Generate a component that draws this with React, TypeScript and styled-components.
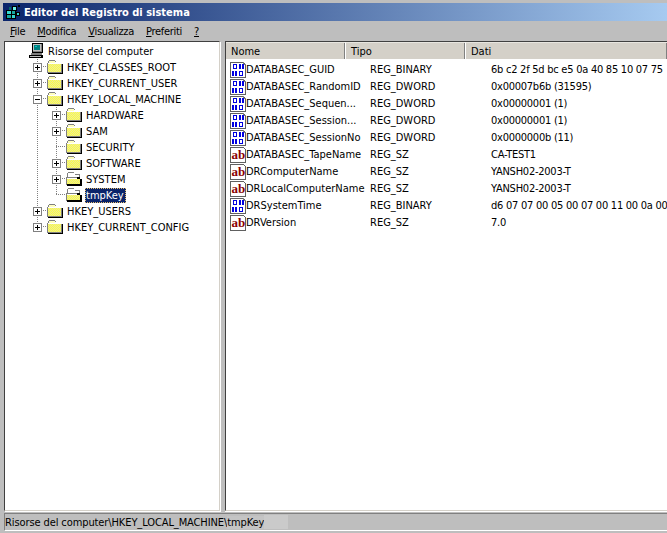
import React from 'react';
import styled, { createGlobalStyle } from 'styled-components';

type Line = 'none' | 'full' | 'half';

const TREE: { label: string; level: number; toggle?: '+' | '-'; open?: boolean; selected?: boolean; last?: boolean }[] = [
  { label: 'HKEY_CLASSES_ROOT', level: 1, toggle: '+' },
  { label: 'HKEY_CURRENT_USER', level: 1, toggle: '+' },
  { label: 'HKEY_LOCAL_MACHINE', level: 1, toggle: '-' },
  { label: 'HARDWARE', level: 2, toggle: '+' },
  { label: 'SAM', level: 2, toggle: '+' },
  { label: 'SECURITY', level: 2 },
  { label: 'SOFTWARE', level: 2, toggle: '+' },
  { label: 'SYSTEM', level: 2, toggle: '+', open: true },
  { label: 'tmpKey', level: 2, open: true, selected: true, last: true },
  { label: 'HKEY_USERS', level: 1, toggle: '+' },
  { label: 'HKEY_CURRENT_CONFIG', level: 1, toggle: '+', last: true },
];

const VALUES: { name: string; type: string; data: string }[] = [
  { name: 'DATABASEC_GUID', type: 'REG_BINARY', data: '6b c2 2f 5d bc e5 0a 40 85 10 07 75' },
  { name: 'DATABASEC_RandomID', type: 'REG_DWORD', data: '0x00007b6b (31595)' },
  { name: 'DATABASEC_Sequen...', type: 'REG_DWORD', data: '0x00000001 (1)' },
  { name: 'DATABASEC_Session...', type: 'REG_DWORD', data: '0x00000001 (1)' },
  { name: 'DATABASEC_SessionNo', type: 'REG_DWORD', data: '0x0000000b (11)' },
  { name: 'DATABASEC_TapeName', type: 'REG_SZ', data: 'CA-TEST1' },
  { name: 'DRComputerName', type: 'REG_SZ', data: 'YANSH02-2003-T' },
  { name: 'DRLocalComputerName', type: 'REG_SZ', data: 'YANSH02-2003-T' },
  { name: 'DRSystemTime', type: 'REG_BINARY', data: 'd6 07 07 00 05 00 07 00 11 00 0a 00' },
  { name: 'DRVersion', type: 'REG_SZ', data: '7.0' },
];

const MENUS: [string, string][] = [
  ['F', 'ile'],
  ['M', 'odifica'],
  ['V', 'isualizza'],
  ['P', 'referiti'],
  ['?', ''],
];

const AppIcon = () => (
  <svg width="16" height="16" viewBox="0 0 16 16" shapeRendering="crispEdges">
    <rect x="1" y="6" width="10" height="9" fill="#000" />
    <rect x="2" y="7" width="4" height="3" fill="#35d8d0" />
    <rect x="7" y="7" width="3" height="3" fill="#18a8a0" />
    <rect x="2" y="11" width="4" height="3" fill="#18a8a0" />
    <rect x="7" y="11" width="3" height="3" fill="#35d8d0" />
    <rect x="7" y="2" width="5" height="5" fill="#000" />
    <rect x="8" y="3" width="3" height="3" fill="#6ff0e8" />
    <rect x="11" y="8" width="4" height="4" fill="#000" />
    <rect x="12" y="9" width="2" height="2" fill="#35d8d0" />
    <rect x="4" y="3" width="2" height="3" fill="#0a6a68" />
    <rect x="13" y="1" width="2" height="2" fill="#000" />
  </svg>
);

const ComputerIcon = () => (
  <svg width="16" height="16" viewBox="0 0 16 16" shapeRendering="crispEdges">
    <rect x="4" y="0" width="11" height="10" fill="#000" />
    <rect x="5" y="1" width="8" height="7" fill="#c0c0c0" />
    <rect x="6" y="2" width="6" height="5" fill="#007f7f" />
    <rect x="7" y="3" width="2" height="1" fill="#00c8c8" />
    <rect x="13" y="1" width="1" height="8" fill="#808080" />
    <rect x="5" y="8" width="8" height="1" fill="#808080" />
    <rect x="3" y="10" width="11" height="2" fill="#808080" />
    <rect x="1" y="12" width="14" height="3" fill="#000" />
    <rect x="2" y="13" width="11" height="1" fill="#c0c0c0" />
  </svg>
);

// checkerboard fill of the old 16 colour folder bitmap
const Dither = ({ x, y, w, h }: { x: number; y: number; w: number; h: number }) => {
  const cells: React.ReactNode[] = [];
  for (let row = 0; row < h; row++) {
    for (let col = 0; col < w; col++) {
      cells.push(
        <rect
          key={`${row}-${col}`}
          x={x + col}
          y={y + row}
          width="1"
          height="1"
          fill={(row + col) % 2 === 0 ? '#ffff40' : '#e8e8a0'}
        />,
      );
    }
  }
  return <>{cells}</>;
};

const FolderIcon = () => (
  <svg width="16" height="14" viewBox="0 0 16 14" shapeRendering="crispEdges">
    <rect x="2" y="0" width="6" height="1" fill="#808080" />
    <rect x="1" y="1" width="1" height="2" fill="#808080" />
    <rect x="8" y="1" width="1" height="1" fill="#808080" />
    <rect x="2" y="1" width="6" height="2" fill="#ffffc0" />
    <rect x="0" y="3" width="15" height="10" fill="#808080" />
    <rect x="1" y="3" width="14" height="1" fill="#ffffff" />
    <Dither x={1} y={4} w={13} h={8} />
    <rect x="1" y="13" width="15" height="1" fill="#000" />
    <rect x="15" y="4" width="1" height="10" fill="#000" />
  </svg>
);

const OpenFolderIcon = () => (
  <svg width="16" height="14" viewBox="0 0 16 14" shapeRendering="crispEdges">
    <rect x="2" y="0" width="6" height="1" fill="#808080" />
    <rect x="1" y="1" width="1" height="5" fill="#808080" />
    <rect x="2" y="1" width="11" height="5" fill="#ffffff" />
    <rect x="9" y="2" width="4" height="1" fill="#808080" />
    <rect x="13" y="2" width="1" height="5" fill="#808080" />
    <rect x="0" y="5" width="11" height="1" fill="#808080" />
    <rect x="1" y="6" width="10" height="1" fill="#ffffff" />
    <rect x="0" y="6" width="1" height="7" fill="#808080" />
    <Dither x={1} y={7} w={13} h={5} />
    <rect x="11" y="5" width="3" height="2" fill="#000" />
    <rect x="14" y="7" width="2" height="6" fill="#000" />
    <rect x="1" y="12" width="15" height="2" fill="#000" />
  </svg>
);

const Toggle = ({ kind }: { kind: '+' | '-' }) => (
  <svg width="9" height="9" viewBox="0 0 9 9" shapeRendering="crispEdges">
    <rect x="0.5" y="0.5" width="8" height="8" fill="#fff" stroke="#808080" />
    <rect x="2" y="4" width="5" height="1" fill="#000" />
    {kind === '+' && <rect x="4" y="2" width="1" height="5" fill="#000" />}
  </svg>
);

const BinaryIcon = () => (
  <ValueIconSvg width="16" height="16" viewBox="0 0 16 16" shapeRendering="crispEdges">
    <path d="M0.5 0.5H13.5L15.5 2.5V15.5H0.5Z" fill="#fff" stroke="#606060" />
    <path d="M13 0H14V2H16V3H13Z" fill="#808080" />
    <g fill="#0000e0">
      <rect x="3" y="2" width="4" height="5" />
      <rect x="9" y="2" width="2" height="5" />
      <rect x="12" y="2" width="2" height="5" />
      <rect x="2" y="9" width="2" height="5" />
      <rect x="5" y="9" width="2" height="5" />
      <rect x="9" y="9" width="4" height="5" />
    </g>
    <g fill="#fff">
      <rect x="4" y="3" width="2" height="3" />
      <rect x="10" y="10" width="2" height="3" />
    </g>
  </ValueIconSvg>
);

const StringIcon = () => (
  <ValueIconSvg width="16" height="16" viewBox="0 0 16 16">
    <path d="M0.5 0.5H13.5L15.5 2.5V15.5H0.5Z" fill="#fff" stroke="#606060" shapeRendering="crispEdges" />
    <text x="1.5" y="12" fontFamily='"Liberation Serif", serif' fontWeight="700" fontSize="13" fill="#8a0000">
      ab
    </text>
  </ValueIconSvg>
);

const App = () => (
  <Window>
    <GlobalStyle />
    <TitleBar>
      <AppIcon />
      <TitleText>Editor del Registro di sistema</TitleText>
    </TitleBar>
    <MenuBar>
      {MENUS.map(([key, rest]) => (
        <MenuItem key={key}>
          <u>{key}</u>
          {rest}
        </MenuItem>
      ))}
    </MenuBar>
    <Main>
      <TreePanel>
        <TreeRow>
          <Guide />
          <ComputerSlot>
            <ComputerIcon />
          </ComputerSlot>
          <Label>Risorse del computer</Label>
        </TreeRow>
        {TREE.map((node) => {
          const tick: Line = node.last ? 'half' : 'full';
          return (
            <TreeRow key={node.label}>
              <Guide />
              {node.level === 2 && <Guide $line="full" />}
              <Guide $line={tick} $tick>
                {node.toggle && <Toggle kind={node.toggle} />}
              </Guide>
              <IconSlot>{node.open ? <OpenFolderIcon /> : <FolderIcon />}</IconSlot>
              <Label $selected={node.selected}>{node.label}</Label>
            </TreeRow>
          );
        })}
      </TreePanel>
      <ListPanel>
        <HeaderRow>
          <HeaderCell $width={120}>Nome</HeaderCell>
          <HeaderCell $width={120}>Tipo</HeaderCell>
          <HeaderCell $width={202}>Dati</HeaderCell>
        </HeaderRow>
        {VALUES.map((value) => (
          <ValueRow key={value.name}>
            <NameCell>
              {value.type === 'REG_SZ' ? <StringIcon /> : <BinaryIcon />}
              <span>{value.name}</span>
            </NameCell>
            <TypeCell>{value.type}</TypeCell>
            <DataCell>{value.data}</DataCell>
          </ValueRow>
        ))}
      </ListPanel>
    </Main>
    <StatusBar>
      <StatusText>
        Risorse del computer\HKEY_LOCAL_MACHINE\<StatusFaded>tmpKey</StatusFaded>
      </StatusText>
      <StatusPatch />
    </StatusBar>
  </Window>
);

export default App;

const GlobalStyle = createGlobalStyle`
  html, body {
    margin: 0;
    padding: 0;
    background: #bebebe;
  }
  * {
    box-sizing: border-box;
  }
`;

const Window = styled.div`
  width: 667px;
  height: 533px;
  overflow: hidden;
  display: flex;
  flex-direction: column;
  padding: 3px 0 0 3px;
  background: #bebebe;
  color: #000;
  font-family: "DejaVu Sans Condensed", "DejaVu Sans", sans-serif;
  font-stretch: condensed;
  font-size: 11px;
`;

const ValueIconSvg = styled.svg`
  flex: none;
`;

const TitleBar = styled.div`
  flex: none;
  height: 18px;
  display: flex;
  align-items: center;
  gap: 3px;
  padding-left: 2px;
  background: linear-gradient(to right, #0a246a, #a6caf0);
`;

const TitleText = styled.span`
  color: #fff;
  font-weight: 700;
  font-size: 11px;
`;

const MenuBar = styled.div`
  flex: none;
  height: 20px;
  display: flex;
  align-items: center;
  gap: 12px;
  padding-left: 7px;
  letter-spacing: -0.3px;
`;

const MenuItem = styled.span`
  white-space: nowrap;
`;

const Main = styled.div`
  flex: none;
  height: 470px;
  display: flex;
  gap: 5px;
  margin-left: 1px;
`;

const TreePanel = styled.div`
  flex: none;
  width: 216px;
  padding: 1px 0 0 4px;
  background: #fff;
  border-top: 1px solid #404040;
  border-left: 1px solid #404040;
  border-right: 1px solid #d4d0c8;
  border-bottom: 1px solid #d4d0c8;
  box-shadow: 1px 1px 0 #fff;
`;

const TreeRow = styled.div`
  height: 16px;
  display: flex;
  align-items: center;
`;

const dots = (direction: string) =>
  `repeating-linear-gradient(${direction}, #808080 0 1px, transparent 1px 2px)`;

const Guide = styled.div<{ $line?: Line; $tick?: boolean }>`
  flex: none;
  width: 19px;
  height: 16px;
  display: flex;
  align-items: center;
  justify-content: center;
  background-repeat: no-repeat;
  background-image: ${({ $line, $tick }) =>
    [$line && $line !== 'none' ? dots('to bottom') : '', $tick ? dots('to right') : '']
      .filter(Boolean)
      .join(', ') || 'none'};
  background-size: ${({ $line, $tick }) =>
    [$line && $line !== 'none' ? `1px ${$line === 'half' ? '50%' : '100%'}` : '', $tick ? '10px 1px' : '']
      .filter(Boolean)
      .join(', ') || 'auto'};
  background-position: ${({ $line, $tick }) =>
    [$line && $line !== 'none' ? '9px 0' : '', $tick ? '9px 7px' : ''].filter(Boolean).join(', ') || '0 0'};
`;

const IconSlot = styled.div`
  flex: none;
  width: 16px;
  height: 14px;
  display: flex;
`;

const ComputerSlot = styled(IconSlot)`
  height: 16px;
  background: #fff;
`;

const Label = styled.span<{ $selected?: boolean }>`
  margin-left: 3px;
  padding: 0 2px 0 1px;
  height: 15px;
  line-height: 15px;
  white-space: nowrap;
  color: ${({ $selected }) => ($selected ? '#fff' : '#000')};
  background: ${({ $selected }) => ($selected ? '#0a246a' : 'transparent')};
  outline: ${({ $selected }) => ($selected ? '1px dotted #e8c070' : 'none')};
  outline-offset: -1px;
`;

const ListPanel = styled.div`
  flex: 1;
  min-width: 0;
  background: #fff;
  border-top: 1px solid #404040;
  border-left: 1px solid #404040;
  border-bottom: 1px solid #d4d0c8;
  overflow: hidden;
  box-shadow: 0 1px 0 #fff;
`;

const HeaderRow = styled.div`
  height: 17px;
  display: flex;
  background: #d4d0c8;
  margin-bottom: 2px;
`;

const HeaderCell = styled.div<{ $width: number }>`
  flex: none;
  width: ${({ $width }) => $width}px;
  padding-left: 5px;
  line-height: 17px;
  border-top: 1px solid #e8e6e0;
  border-right: 1px solid #fff;
  box-shadow: inset -1px 0 0 #808080;
  white-space: nowrap;
`;

const ValueRow = styled.div`
  height: 17px;
  display: flex;
  align-items: center;
  padding-left: 4px;
  white-space: nowrap;
`;

const NameCell = styled.div`
  flex: none;
  width: 140px;
  display: flex;
  align-items: center;
`;

const TypeCell = styled.div`
  flex: none;
  width: 121px;
`;

const DataCell = styled.div`
  flex: none;
  letter-spacing: -0.25px;
`;

const StatusBar = styled.div`
  flex: none;
  height: 18px;
  margin: 2px 0 0 1px;
  display: flex;
  align-items: center;
  border-top: 1px solid #808080;
  border-left: 1px solid #808080;
  border-bottom: 1px solid #fff;
`;

const StatusText = styled.span`
  white-space: nowrap;
  letter-spacing: -0.1px;
`;

const StatusFaded = styled.span`
  background: #c4c4c4;
`;

const StatusPatch = styled.div`
  width: 24px;
  height: 14px;
  background: #cacaca;
`;
